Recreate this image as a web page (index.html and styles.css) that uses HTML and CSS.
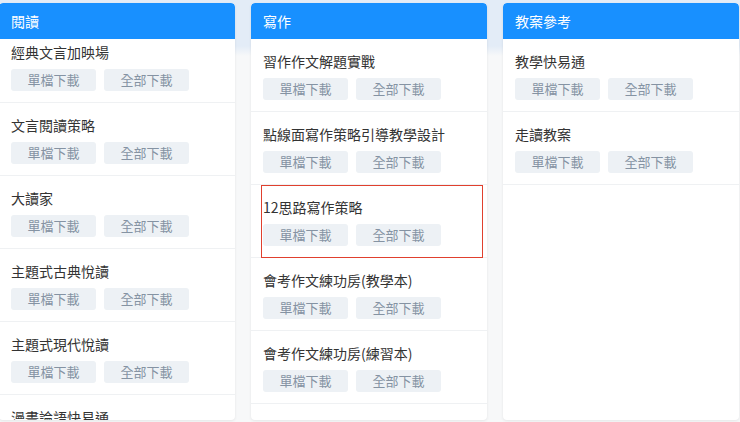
FILE: index.html
```html
<!DOCTYPE html>
<html lang="zh-Hant">
<head>
<meta charset="utf-8">
<title>資源下載</title>
<link rel="stylesheet" href="styles.css">
</head>
<body>
<div class="board">
  <section class="card">
    <div class="card-head">閱讀</div>
    <div class="list-viewport">
      <div class="list list-scrolled">
        <div class="item"><div class="item-title">經典文言加映場</div><div class="btns"><span class="btn">單檔下載</span><span class="btn">全部下載</span></div></div>
        <div class="item"><div class="item-title">文言閱讀策略</div><div class="btns"><span class="btn">單檔下載</span><span class="btn">全部下載</span></div></div>
        <div class="item"><div class="item-title">大讀家</div><div class="btns"><span class="btn">單檔下載</span><span class="btn">全部下載</span></div></div>
        <div class="item"><div class="item-title">主題式古典悅讀</div><div class="btns"><span class="btn">單檔下載</span><span class="btn">全部下載</span></div></div>
        <div class="item"><div class="item-title">主題式現代悅讀</div><div class="btns"><span class="btn">單檔下載</span><span class="btn">全部下載</span></div></div>
        <div class="item"><div class="item-title">漫畫論語快易通</div><div class="btns"><span class="btn">單檔下載</span><span class="btn">全部下載</span></div></div>
      </div>
    </div>
  </section>
  <section class="card">
    <div class="card-head">寫作</div>
    <div class="list-viewport">
      <div class="list">
        <div class="item"><div class="item-title">習作作文解題實戰</div><div class="btns"><span class="btn">單檔下載</span><span class="btn">全部下載</span></div></div>
        <div class="item"><div class="item-title">點線面寫作策略引導教學設計</div><div class="btns"><span class="btn">單檔下載</span><span class="btn">全部下載</span></div></div>
        <div class="item item-marked"><div class="mark"></div><div class="item-title">12思路寫作策略</div><div class="btns"><span class="btn">單檔下載</span><span class="btn">全部下載</span></div></div>
        <div class="item"><div class="item-title">會考作文練功房(教學本)</div><div class="btns"><span class="btn">單檔下載</span><span class="btn">全部下載</span></div></div>
        <div class="item"><div class="item-title">會考作文練功房(練習本)</div><div class="btns"><span class="btn">單檔下載</span><span class="btn">全部下載</span></div></div>
      </div>
    </div>
  </section>
  <section class="card">
    <div class="card-head">教案參考</div>
    <div class="list-viewport">
      <div class="list">
        <div class="item"><div class="item-title">教學快易通</div><div class="btns"><span class="btn">單檔下載</span><span class="btn">全部下載</span></div></div>
        <div class="item"><div class="item-title">走讀教案</div><div class="btns"><span class="btn">單檔下載</span><span class="btn">全部下載</span></div></div>
      </div>
    </div>
  </section>
</div>
</body>
</html>
```
FILE: styles.css
```css
html, body {
  margin: 0;
  padding: 0;
}
body {
  width: 740px;
  height: 422px;
  overflow: hidden;
  font-family: "Noto Sans CJK TC", "Noto Sans", "Liberation Sans", sans-serif;
  background: linear-gradient(to bottom, #e3ecf7 0, #e3ecf7 46px, #f7f8f9 56px, #f7f8f9 100%);
}
.board {
  display: flex;
  gap: 16px;
  padding-top: 3px;
  margin-left: -1px;
}
.card {
  flex: 0 0 236px;
  width: 236px;
  height: 417px;
  background: #fff;
  border-radius: 4px;
  box-shadow: 0 1px 3px rgba(0, 0, 0, 0.08);
  display: flex;
  flex-direction: column;
  overflow: hidden;
}
.card-head {
  height: 36px;
  line-height: 36px;
  padding: 0 12px;
  background: #1890ff;
  color: #fff;
  font-size: 14px;
  border-radius: 4px 4px 0 0;
}
.list-viewport {
  flex: 1;
  overflow: hidden;
}
.list-scrolled {
  margin-top: -9px;
}
.item {
  position: relative;
  padding: 12px 12px 11px;
  border-bottom: 1px solid #eff1f3;
}
.item-title {
  font-size: 14px;
  line-height: 20px;
  color: #333;
  margin-bottom: 7px;
  white-space: nowrap;
}
.btns {
  display: flex;
  gap: 8px;
}
.btn {
  width: 85px;
  height: 22px;
  line-height: 22px;
  text-align: center;
  font-size: 13px;
  color: #8593a3;
  background: #edf1f5;
  border-radius: 3px;
}
.mark {
  position: absolute;
  top: 0;
  bottom: -1px;
  left: 10px;
  right: 4px;
  border: 1px solid #e0402e;
  pointer-events: none;
}
```
